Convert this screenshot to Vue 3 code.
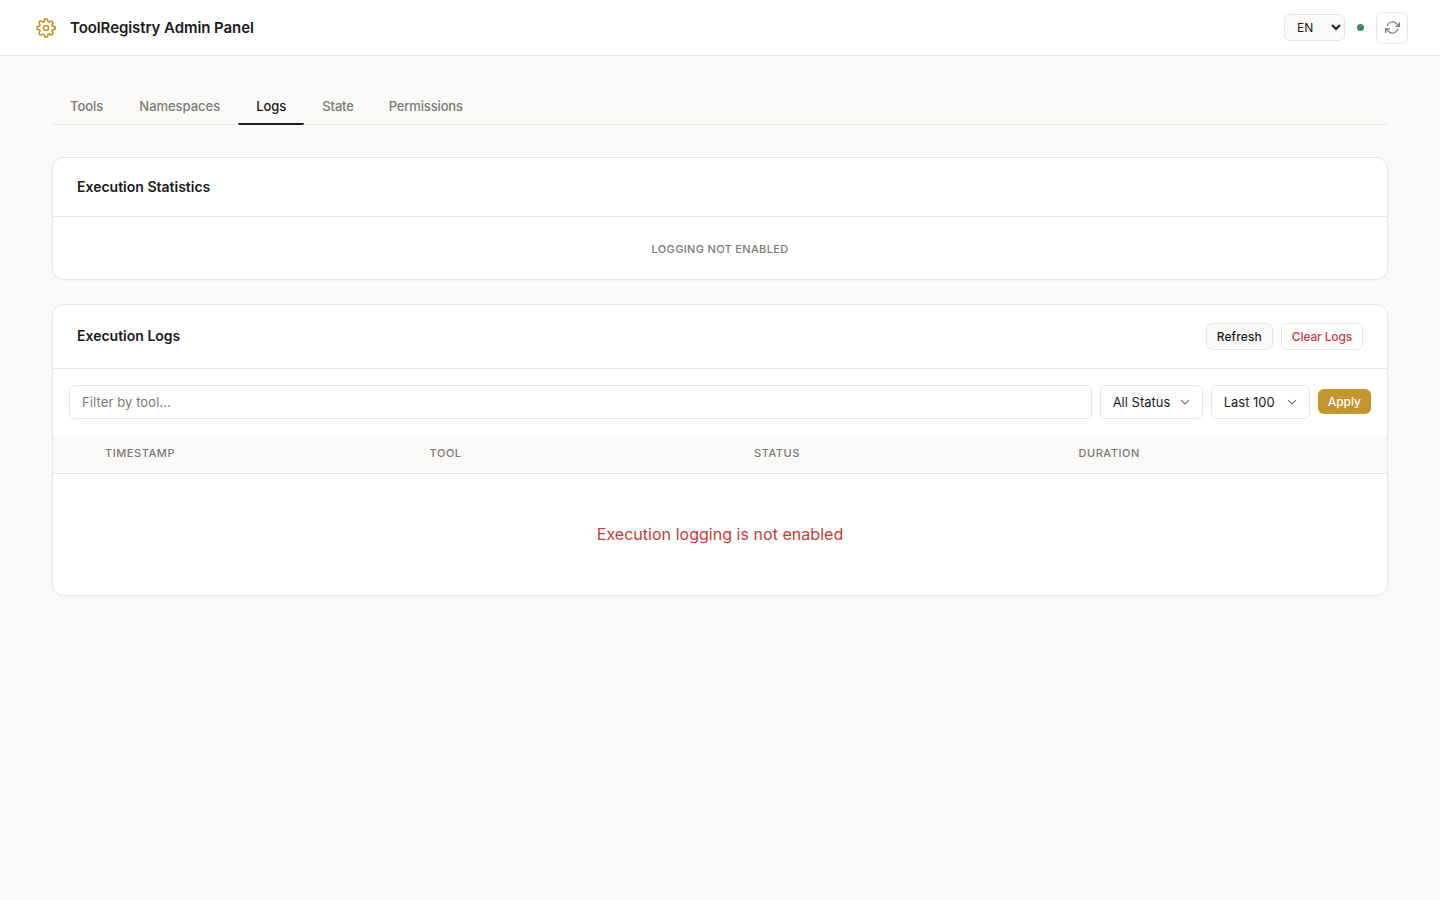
<template>
    <div class="app">
        <header class="header">
            <div class="brand">
                <span class="brand__logo">
                    <svg width="20" height="20" viewBox="0 0 24 24" fill="none" stroke="currentColor" stroke-width="2"
                        stroke-linecap="round" stroke-linejoin="round">
                        <circle cx="12" cy="12" r="3" />
                        <path
                            d="M19.4 15a1.65 1.65 0 0 0 .33 1.82l.06.06a2 2 0 0 1 0 2.83 2 2 0 0 1-2.83 0l-.06-.06a1.65 1.65 0 0 0-1.82-.33 1.65 1.65 0 0 0-1 1.51V21a2 2 0 0 1-2 2 2 2 0 0 1-2-2v-.09A1.65 1.65 0 0 0 9 19.4a1.65 1.65 0 0 0-1.82.33l-.06.06a2 2 0 0 1-2.83 0 2 2 0 0 1 0-2.83l.06-.06a1.65 1.65 0 0 0 .33-1.82 1.65 1.65 0 0 0-1.51-1H3a2 2 0 0 1-2-2 2 2 0 0 1 2-2h.09A1.65 1.65 0 0 0 4.6 9a1.65 1.65 0 0 0-.33-1.82l-.06-.06a2 2 0 0 1 0-2.83 2 2 0 0 1 2.83 0l.06.06a1.65 1.65 0 0 0 1.82.33H9a1.65 1.65 0 0 0 1-1.51V3a2 2 0 0 1 2-2 2 2 0 0 1 2 2v.09a1.65 1.65 0 0 0 1 1.51 1.65 1.65 0 0 0 1.82-.33l.06-.06a2 2 0 0 1 2.83 0 2 2 0 0 1 0 2.83l-.06.06a1.65 1.65 0 0 0-.33 1.82V9a1.65 1.65 0 0 0 1.51 1H21a2 2 0 0 1 2 2 2 2 0 0 1-2 2h-.09a1.65 1.65 0 0 0-1.51 1z" />
                    </svg>
                </span>
                <h1 class="brand__title">ToolRegistry Admin Panel</h1>
            </div>
            <div class="header__actions">
                <select v-model="lang" class="lang">
                    <option value="en">EN</option>
                    <option value="zh">中文</option>
                </select>
                <span class="status-dot"></span>
                <button class="icon-btn" title="Refresh">
                    <svg width="15" height="15" viewBox="0 0 24 24" fill="none" stroke="currentColor"
                        stroke-width="2" stroke-linecap="round" stroke-linejoin="round">
                        <path d="M23 4v6h-6" />
                        <path d="M1 20v-6h6" />
                        <path d="M3.51 9a9 9 0 0 1 14.85-3.36L23 10M1 14l4.64 4.36A9 9 0 0 0 20.49 15" />
                    </svg>
                </button>
            </div>
        </header>

        <main class="main">
            <nav class="tabs">
                <button v-for="tab in tabs" :key="tab" class="tab" :class="{ 'tab--active': isActive(tab) }"
                    @click="activate(tab)">{{ tab }}</button>
            </nav>

            <section class="card">
                <div class="card__header">
                    <h2 class="card__title">Execution Statistics</h2>
                </div>
                <div class="stats-empty">Logging not enabled</div>
            </section>

            <section class="card">
                <div class="card__header card__header--actions">
                    <h2 class="card__title">Execution Logs</h2>
                    <div class="card__actions">
                        <button class="btn btn--secondary">Refresh</button>
                        <button class="btn btn--danger">Clear Logs</button>
                    </div>
                </div>
                <div class="filters">
                    <input v-model="filter.tool" class="field field--text" type="text" placeholder="Filter by tool...">
                    <div class="picker">
                        <select v-model="filter.status" class="field field--status">
                            <option value="">All Status</option>
                            <option value="success">Success</option>
                            <option value="error">Error</option>
                        </select>
                        <svg class="picker__arrow" width="12" height="12" viewBox="0 0 12 12" fill="none"
                            stroke="currentColor" stroke-width="1.2" stroke-linecap="round">
                            <path d="M2.3 4.3L6 8l3.7-3.7" />
                        </svg>
                    </div>
                    <div class="picker">
                        <select v-model="filter.limit" class="field field--limit">
                            <option value="50">Last 50</option>
                            <option value="100">Last 100</option>
                            <option value="500">Last 500</option>
                        </select>
                        <svg class="picker__arrow" width="12" height="12" viewBox="0 0 12 12" fill="none"
                            stroke="currentColor" stroke-width="1.2" stroke-linecap="round">
                            <path d="M2.3 4.3L6 8l3.7-3.7" />
                        </svg>
                    </div>
                    <button class="btn btn--primary">Apply</button>
                </div>
                <table class="logs">
                    <thead>
                        <tr>
                            <th class="logs__expand"></th>
                            <th v-for="col in columns" :key="col">{{ col }}</th>
                        </tr>
                    </thead>
                    <tbody>
                        <tr>
                            <td colspan="5" class="logs__error">Execution logging is not enabled</td>
                        </tr>
                    </tbody>
                </table>
            </section>
        </main>
    </div>
</template>

<script setup>
import { reactive, ref } from "vue";

const tabs = ['Tools', 'Namespaces', 'Logs', 'State', 'Permissions']
const columns = ['Timestamp', 'Tool', 'Status', 'Duration']
const lang = ref('en')
const activeTab = ref('Logs')
const filter = reactive({
    tool: '',
    status: '',
    limit: '100'
})
const activate = (tab) => {
    activeTab.value = tab
}
const isActive = (tab) => {
    return activeTab.value == tab
}
</script>

<style>
body {
    background: #faf9f7;
}
</style>

<style scoped>
.app {
    min-height: 100vh;
    font-family: Inter, "Noto Sans CJK SC", sans-serif;
    font-size: 14px;
    line-height: 1.6;
    color: #1a1a1a;
    background: #faf9f7;
}
.app * {
    box-sizing: border-box;
}
button,
select,
input {
    font-family: inherit;
    margin: 0;
}
.header {
    display: flex;
    align-items: center;
    justify-content: space-between;
    height: 56px;
    box-sizing: border-box;
    padding: 0 32px;
    background: #fff;
    border-bottom: 1px solid #e8e6e1;
}
.brand {
    display: flex;
    align-items: center;
    gap: 10px;
}
.brand__logo {
    display: flex;
    align-items: center;
    justify-content: center;
    width: 28px;
    height: 28px;
    color: #c4942e;
}
.brand__title {
    margin: 0;
    font-size: 15px;
    font-weight: 600;
    letter-spacing: -0.005em;
}
.header__actions {
    display: flex;
    align-items: center;
    gap: 12px;
}
.lang {
    width: 61px;
    height: 27px;
    padding: 4px 8px;
    font-size: 12px;
    color: #1a1a1a;
    background: #faf9f7;
    border: 1px solid #e8e6e1;
    border-radius: 6px;
}
.status-dot {
    width: 7px;
    height: 7px;
    border-radius: 50%;
    background: #3d8b5e;
}
.icon-btn {
    display: flex;
    align-items: center;
    justify-content: center;
    width: 32px;
    height: 32px;
    padding: 0;
    color: #7a7a75;
    background: #fff;
    border: 1px solid #e8e6e1;
    border-radius: 6px;
    cursor: pointer;
}
.main {
    padding: 32px 52px;
}
.tabs {
    display: flex;
    height: 37px;
    margin-bottom: 32px;
    border-bottom: 1px solid #e8e6e1;
}
.tab {
    height: 37px;
    padding: 0 18px;
    font-size: 13px;
    font-weight: 500;
    letter-spacing: -0.002em;
    color: #7a7a75;
    background: none;
    border: 0;
    border-bottom: 2px solid transparent;
    border-radius: 2px;
    cursor: pointer;
}
.tab:nth-child(n+4) {
    padding-right: 17px;
    letter-spacing: -0.012em;
}
.tab--active {
    color: #1a1a1a;
    border-bottom-color: #1a1a1a;
}
.card {
    margin-bottom: 24px;
    overflow: hidden;
    background: #fff;
    border: 1px solid #e8e6e1;
    border-radius: 12px;
    box-shadow: 0 1px 3px rgba(0, 0, 0, .04);
}
.card__header {
    display: flex;
    align-items: center;
    justify-content: space-between;
    height: 59px;
    padding: 0 24px;
    border-bottom: 1px solid #e8e6e1;
}
.card__header--actions {
    height: 64px;
}
.card__title {
    margin: 0;
    font-size: 14px;
    font-weight: 600;
}
.card__actions {
    display: flex;
    gap: 8px;
}
.stats-empty {
    padding: 25px 24px 23px;
    font-size: 11px;
    font-weight: 500;
    line-height: 14px;
    letter-spacing: 0.03em;
    text-align: center;
    text-transform: uppercase;
    color: #7a7a75;
}
.btn {
    height: 27px;
    padding: 0 10px;
    font-size: 12px;
    font-weight: 500;
    border: 1px solid #e8e6e1;
    border-radius: 6px;
    cursor: pointer;
}
.btn--secondary {
    letter-spacing: 0.01em;
    color: #1a1a1a;
    background: #faf9f7;
}
.btn--danger {
    letter-spacing: -0.012em;
    color: #c93b3b;
    background: #fff;
}
.btn--primary {
    height: 25px;
    margin-bottom: 1px;
    color: #fff;
    background: #c4942e;
    border: 0;
}
.filters {
    display: flex;
    align-items: center;
    gap: 8px;
    padding: 16px;
}
.field {
    height: 34px;
    padding: 0 12px;
    font-size: 13px;
    color: #1a1a1a;
    background: #fff;
    border: 1px solid #e8e6e1;
    border-radius: 6px;
    appearance: none;
}
.field--text {
    flex: 1;
    min-width: 0;
}
.field--text::placeholder {
    letter-spacing: 0.008em;
    color: #7a7a75;
}
.field--status {
    width: 103px;
}
.field--limit {
    width: 99px;
}
.picker {
    position: relative;
    display: flex;
}
.picker__arrow {
    position: absolute;
    top: 11px;
    right: 12px;
    color: #7a7a75;
    pointer-events: none;
}
.logs {
    width: 100%;
    border-collapse: separate;
    border-spacing: 0;
    table-layout: fixed;
}
.logs th {
    height: 39px;
    padding: 0 16px 2px;
    font-size: 11px;
    font-weight: 500;
    line-height: 14px;
    letter-spacing: 0.05em;
    text-align: left;
    text-transform: uppercase;
    color: #7a7a75;
    background: #faf9f7;
    border-bottom: 1px solid #e8e6e1;
}
.logs .logs__expand {
    width: 36px;
    padding: 0;
}
.logs__error {
    height: 121px;
    padding: 0;
    font-size: 16px;
    letter-spacing: 0.002em;
    text-align: center;
    color: #c93b3b;
}
</style>
